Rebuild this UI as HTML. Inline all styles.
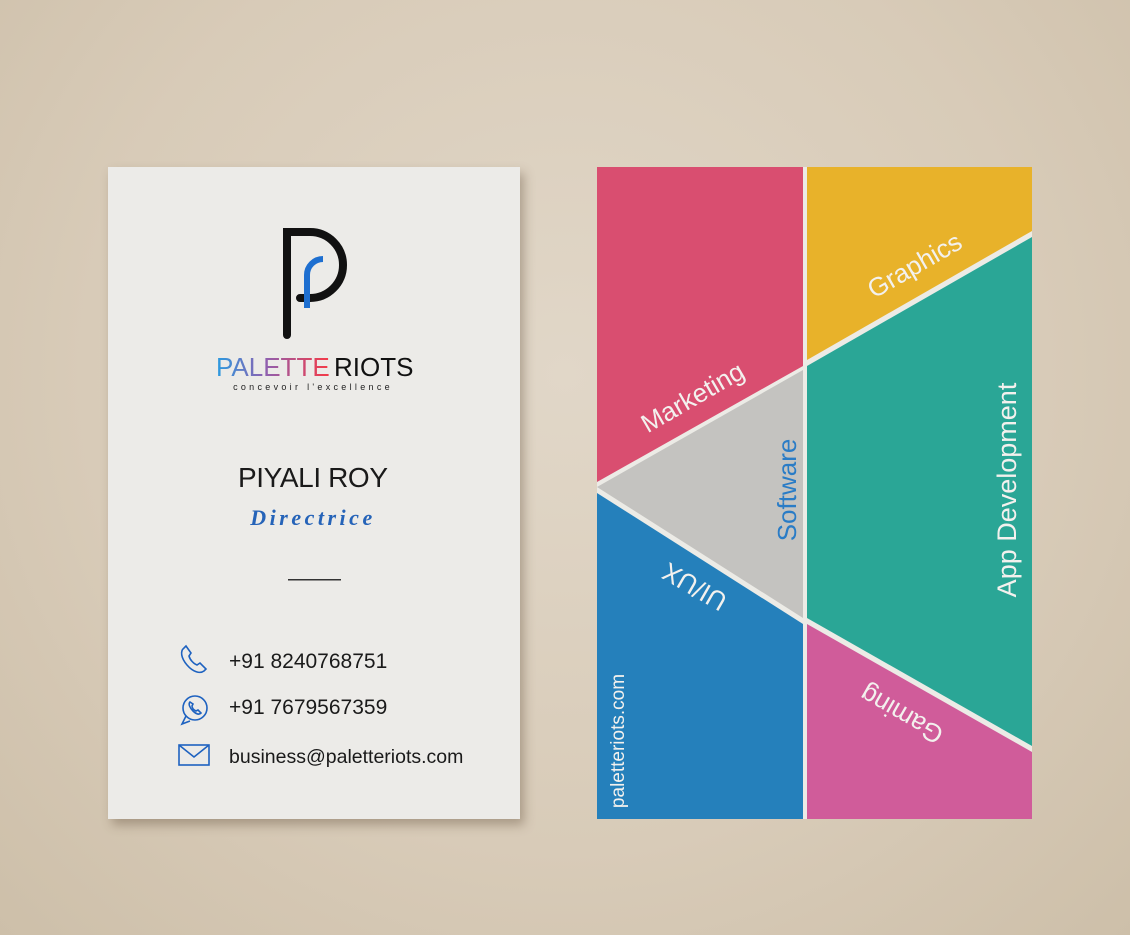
<!DOCTYPE html>
<html><head><meta charset="utf-8"><style>
html,body{margin:0;padding:0}
body{width:1130px;height:935px;position:relative;overflow:hidden;background:radial-gradient(ellipse at 50% 40%,#e1d7c8 0%,#d8cbb8 60%,#cdbfa9 100%);font-family:"Liberation Sans",sans-serif}
.card{position:absolute;left:108px;top:167px;width:412px;height:652px;background:#ecebe8;box-shadow:4px 6px 10px rgba(80,60,40,.35)}
</style></head><body>
<div class="card"></div>
<svg style="position:absolute;left:0;top:0" width="1130" height="935">
<defs><linearGradient id="g" gradientUnits="userSpaceOnUse" x1="216" x2="326" y1="0" y2="0"><stop offset="0" stop-color="#2a9be0"/><stop offset=".45" stop-color="#8f60b0"/><stop offset="1" stop-color="#f03c4c"/></linearGradient></defs>
<path d="M287 335 V232 H310 A33 33 0 0 1 343 265 A33 33 0 0 1 310 298 H300" fill="none" stroke="#111" stroke-width="8" stroke-linecap="round"/>
<path d="M307 308 V275 A16 16 0 0 1 323 259" fill="none" stroke="#1e6fd0" stroke-width="6"/>
<text x="216" y="376" font-size="26" font-family="Liberation Sans" fill="url(#g)">PALETTE</text>
<text x="334" y="376" font-size="26" font-family="Liberation Sans" fill="#111">RIOTS</text>
<text x="313" y="390" text-anchor="middle" font-size="9" fill="#222" letter-spacing="3.3">concevoir l'excellence</text>
<text x="313" y="487" text-anchor="middle" font-size="28" fill="#1a1a1a" textLength="150">PIYALI ROY</text>
<text x="313" y="525" text-anchor="middle" font-size="22" fill="#2563b8" font-family="Liberation Serif" font-style="italic" font-weight="bold" letter-spacing="3.5">Directrice</text>
<rect x="288" y="579" width="53" height="1.5" fill="#333"/>
<g fill="none" stroke="#1e62c0" stroke-width="1.6">
<path d="M184 648 c-4 3 -3 10 3 17 c6 7 13 9 17 6 l2 -2 -6 -6 -3 2 c-3 -1 -7 -5 -8 -9 l2 -3 -5 -7 z"/>
<circle cx="195" cy="708" r="12"/><path d="M186 716 l-4 8 8 -3"/>
<path d="M190 702 c-2 2 0 6 3 9 c3 3 6 4 8 2 l-3 -3 -2 1 c-2 -1 -4 -3 -4 -5 l1 -2 z"/>
<rect x="179" y="745" width="30" height="20"/><path d="M179 745 l15 12 15 -12"/>
</g>
<g font-size="21" fill="#1a1a1a"><text x="229" y="668">+91 8240768751</text><text x="229" y="714">+91 7679567359</text><text x="229" y="763" font-size="19.5">business@paletteriots.com</text></g>
<g transform="translate(597,167)">
<rect width="435" height="652" fill="#ecebe6"/>
<polygon points="0,0 206,0 206,199 0,315" fill="#d94e70"/>
<polygon points="210,0 435,0 435,64 210,193" fill="#e8b22a"/>
<polygon points="210,199 435,70 435,579 210,451" fill="#2aa696"/>
<polygon points="0,320 206,203 206,451 " fill="#c4c3c0"/>
<polygon points="0,326 206,457 206,652 0,652" fill="#2580bb"/>
<polygon points="210,457 435,585 435,652 210,652" fill="#d05c9a"/>
<g font-size="26" fill="#f3f1ee" font-family="Liberation Sans">
<text transform="translate(100,238) rotate(-30)" text-anchor="middle">Marketing</text>
<text transform="translate(322,106) rotate(-30)" text-anchor="middle">Graphics</text>
<text transform="translate(419,323) rotate(-90)" text-anchor="middle" font-size="27">App Development</text>
<text transform="translate(102,412) rotate(210)" text-anchor="middle">UI/UX</text>
<text transform="translate(309,540) rotate(210)" text-anchor="middle">Gaming</text>
<text transform="translate(199,323) rotate(-90)" text-anchor="middle" fill="#2a7cc6">Software</text>
<text transform="translate(27,574) rotate(-90)" text-anchor="middle" font-size="19">paletteriots.com</text>
</g></g>
</svg>
</body></html>
